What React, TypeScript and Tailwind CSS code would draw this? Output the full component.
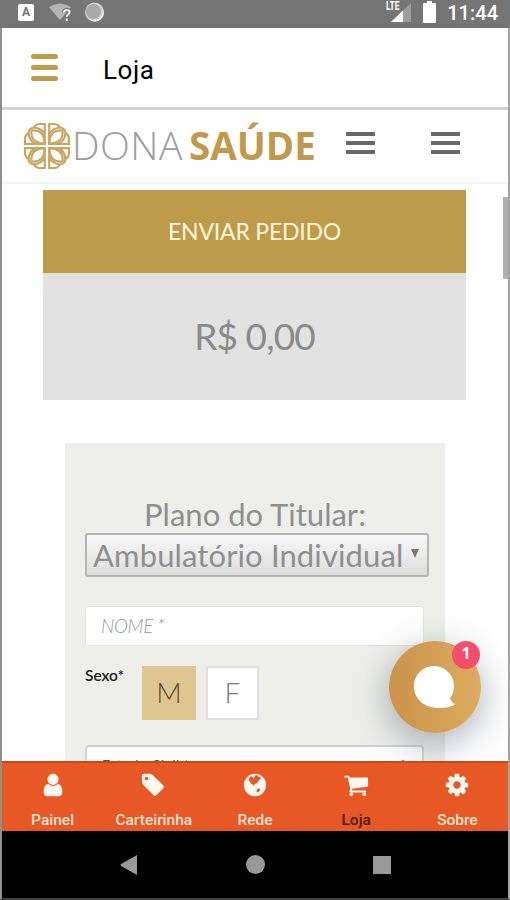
import React from "react";

const tabs = [
  {
    label: "Painel",
    viewBox: "0 0 1280 1792",
    path: "M1280 1399q0 109-62.500 187t-150.500 78h-854q-88 0-150.500-78t-62.500-187q0-85 8.500-160.500t31.500-152 58.500-131 94-89 134.500-34.500q131 128 313 128t313-128q76 0 134.500 34.500t94 89 58.500 131 31.500 152 8.500 160.500zm-256-887q0 159-112.500 271.500t-271.500 112.500-271.500-112.500-112.500-271.500 112.500-271.500 271.500-112.500 271.500 112.500 112.500 271.500z",
  },
  {
    label: "Carteirinha",
    viewBox: "0 0 1536 1792",
    path: "M384 448q0-53-37.500-90.500t-90.500-37.500-90.500 37.500-37.500 90.500 37.500 90.500 90.500 37.500 90.500-37.500 37.500-90.500zm1067 576q0 53-37 90l-491 492q-39 37-91 37-53 0-90-37l-715-716q-38-37-64.500-101t-26.500-117v-416q0-52 38-90t90-38h416q53 0 117 26.500t102 64.500l715 714q37 39 37 91z",
  },
  {
    label: "Rede",
    viewBox: "0 0 1536 1792",
    path: "M768 128a768 768 0 1 0 0 1536a768 768 0 1 0 0-1536zM390 380L520 300L650 400L760 330L740 250L900 230L1010 330L1120 330L1180 450L1060 540L980 680L850 790L730 850L690 970L600 860L470 800L410 650L330 560zM880 1230L1010 1120L1130 1190L1080 1330L900 1430z",
  },
  {
    label: "Loja",
    viewBox: "0 0 1664 1792",
    path: "M640 1536q0 52-38 90t-90 38-90-38-38-90 38-90 90-38 90 38 38 90zm896 0q0 52-38 90t-90 38-90-38-38-90 38-90 90-38 90 38 38 90zm128-1088v512q0 24-16.500 42.500t-40.500 21.500l-1044 122q13 60 13 70 0 16-24 64h920q26 0 45 19t19 45-19 45-45 19h-1024q-26 0-45-19t-19-45q0-11 8-31.500t16-36 21.500-40 15.500-29.500l-177-823h-204q-26 0-45-19t-19-45 19-45 45-19h256q16 0 28.500 6.500t19.500 15.500 13 24.500 8 26 5.500 29.500 4.500 26h1201q26 0 45 19t19 45z",
  },
  {
    label: "Sobre",
    viewBox: "0 0 1536 1792",
    path: "M1024 896q0-106-75-181t-181-75-181 75-75 181 75 181 181 75 181-75 75-181zm512-109v222q0 12-8 23t-20 13l-185 28q-19 54-39 91 35 50 107 138 10 12 10 25t-9 23q-27 37-99 108t-94 71q-12 0-26-9l-138-108q-44 23-91 38-16 136-29 186-7 28-36 28h-222q-14 0-24.500-8.500t-11.500-21.500l-28-184q-49-16-90-37l-141 107q-10 9-25 9-14 0-25-11-126-114-165-168-7-10-7-23 0-12 8-23 15-21 51-66.500t54-70.500q-27-50-41-99l-183-27q-13-2-21-12.500t-8-23.500v-222q0-12 8-23t19-13l186-28q14-46 39-92-40-57-107-138-10-12-10-24 0-10 9-23 26-36 98.500-107.500t94.500-71.500q13 0 26 10l138 107q44-23 91-38 16-136 29-186 7-28 36-28h222q14 0 24.500 8.500t11.500 21.500l28 184q49 16 90 37l142-107q9-9 24-9 13 0 25 10 129 119 165 170 7 8 7 22 0 12-8 23-15 21-51 66.500t-54 70.500q26 50 41 98l183 28q13 2 21 12.500t8 23.500z",
  },
];

function StatusBar() {
  return (
    <div className="flex h-7 shrink-0 items-start justify-between bg-[#757575] pl-[18px] pr-3 text-white">
      <div className="flex items-start">
        <div className="mt-1 flex h-[17px] w-4 items-center justify-center rounded-[2px] bg-white font-['Roboto',sans-serif] text-[12px] font-bold leading-[17px] text-[#757575]">
          A
        </div>
        <svg className="ml-[15px] mt-[2px]" width="24" height="21" viewBox="0 0 24 21">
          <path d="M0 5Q11-2 22 5L11 18z" fill="#b5b5b5" />
          <path
            d="M15 10.500Q15 8 17.700 8Q20.500 8 20.500 10.300Q20.500 11.500 19 12.500Q17.700 13.400 17.700 15M17.700 16.500V19"
            fill="none"
            stroke="#757575"
            strokeWidth="4"
          />
          <path
            d="M15 10.500Q15 8 17.700 8Q20.500 8 20.500 10.300Q20.500 11.500 19 12.500Q17.700 13.400 17.700 15M17.700 16.500V19"
            fill="none"
            stroke="#f2f2f2"
            strokeWidth="2"
          />
        </svg>
        <svg className="ml-[11px] mt-[2px]" width="21" height="21" viewBox="0 0 21 21">
          <circle cx="10.500" cy="10" r="9.500" fill="#d0d0d0" />
          <circle cx="9.500" cy="9.500" r="7.500" fill="#a9a9a9" />
          <path d="M4 16.500Q14 21.500 18.500 12Q19 9 18.500 6Q22 14 15 18.500Q9 21 4 16.500" fill="#f5f5f5" />
        </svg>
      </div>
      <div className="flex items-start">
        <div className="relative h-6 w-[26px]">
          <svg className="absolute left-[6px] top-[3px]" width="20" height="19" viewBox="0 0 20 19">
            <path d="M0 19L20 0V19z" fill="#9d9d9d" />
            <path d="M0 19L12 7.600V19z" fill="#fff" />
          </svg>
          <span className="absolute left-[1px] top-0 origin-left scale-x-[0.7] bg-[#757575] font-['Roboto',sans-serif] text-[12px] font-bold leading-[13px]">
            LTE
          </span>
        </div>
        <svg className="ml-3" width="13" height="24" viewBox="0 0 13 24">
          <path d="M4 1h5v2h3q1 0 1 1v18q0 1-1 1H1q-1 0-1-1V4q0-1 1-1h3z" fill="#fff" />
        </svg>
        <span className="ml-[11px] mt-[2px] font-['Roboto',sans-serif] text-[20px] font-medium leading-[22px]">
          11:44
        </span>
      </div>
    </div>
  );
}

function LogoQuarter({ transform }: { transform?: string }) {
  return (
    <g transform={transform}>
      <path d="M-2.200-2.200V-22H-7Q-11-22-13-18.500Q-18-18-18.500-13Q-22-11-22-7V-2.200z" />
      <path d="M-2.200-2.200Q-17-3-15.500-15.500Q-3-17-2.200-2.200M-13-18.500Q-6-18-2.200-12M-18.500-13Q-18-6-12-2.200" />
    </g>
  );
}

function Logo() {
  return (
    <div className="flex w-[300px] items-center">
      <svg width="48" height="48" viewBox="-24 -24 48 48" fill="none" stroke="#c8a561" strokeWidth="2.200">
        <LogoQuarter />
        <LogoQuarter transform="scale(-1 1)" />
        <LogoQuarter transform="scale(1 -1)" />
        <LogoQuarter transform="scale(-1 -1)" />
      </svg>
      <span className="mb-[3px] ml-px w-[117px] font-['Open_Sans',sans-serif] text-[39px] font-light leading-[48px] tracking-[0.5px] text-[#9d9d9d]">
        DONA
      </span>
      <span className="mb-[3px] font-['Open_Sans',sans-serif] text-[38.500px] font-bold leading-[48px] text-[#bf9a4b]">
        SAÚDE
      </span>
    </div>
  );
}

function Burger() {
  return (
    <button className="mb-[6px] flex w-[29px] flex-col gap-[5px]">
      <span className="h-1 w-full bg-[#686868]" />
      <span className="h-1 w-full bg-[#686868]" />
      <span className="h-1 w-full bg-[#686868]" />
    </button>
  );
}

function ChatButton() {
  return (
    <button className="absolute left-[387px] top-[531px] h-[92px] w-[92px] rounded-full bg-linear-to-r from-[#cc9349] to-[#dcab61] shadow-[0_10px_32px_4px_rgba(60,70,90,0.35)]">
      <svg className="absolute left-[25px] top-[25px]" width="42" height="43" viewBox="0 0 42 43">
        <path d="M20 0C31 0 40 9 40 20Q40 28 36 32Q37 36 41 38Q37 42 25 42C9 42 0 32 0 20C0 9 9 0 20 0" fill="#fff" />
      </svg>
      <span className="absolute left-[63px] top-0 flex h-7 w-7 items-center justify-center rounded-full bg-[#f64c6b] pb-1 font-['Open_Sans',sans-serif] text-[16px] font-bold text-white">
        1
      </span>
    </button>
  );
}

export default function App() {
  return (
    <div className="flex h-[900px] w-[510px] flex-col overflow-hidden bg-white">
      <StatusBar />
      <div className="flex min-h-0 flex-1 flex-col border-x-2 border-b-2 border-l-[#8f8f8f] border-r-[#a5a5a5] border-b-[#444]">
        {/* app bar */}
        <header className="flex h-[79px] shrink-0 items-center pl-[29px]">
          <div className="flex w-[27px] flex-col gap-[6px]">
            <span className="h-[5px] rounded-full bg-[#bf9a4b]" />
            <span className="h-[5px] rounded-full bg-[#bf9a4b]" />
            <span className="h-[5px] rounded-full bg-[#bf9a4b]" />
          </div>
          <h1 className="ml-[45px] mt-[5px] font-['Roboto',sans-serif] text-[26px] leading-8 tracking-[0.6px] text-black">
            Loja
          </h1>
        </header>

        <main className="relative flex min-h-0 flex-1 flex-col overflow-hidden border-t-[3px] border-[#d2d2d2]">
          <div className="flex h-[74px] shrink-0 items-center border-b-2 border-[#f3f4f4] pl-[21px]">
            <Logo />
            <div className="ml-[23px]">
              <Burger />
            </div>
            <div className="ml-[56px]">
              <Burger />
            </div>
          </div>

          <section className="ml-[41px] mt-[6px] w-[423px] shrink-0 text-center font-['Lato',sans-serif]">
            <button className="block h-[83px] w-full bg-[#be9a4b] text-[23px] tracking-[-0.2px] text-[#fff6dc]">
              ENVIAR PEDIDO
            </button>
            <div className="flex h-[127px] items-center justify-center bg-[#e2e2e2] pb-[2px] text-[37px] tracking-[-0.9px] text-[#8a8a8a]">
              R$ 0,00
            </div>
          </section>

          <form className="ml-[63px] mt-[43px] h-[400px] w-[380px] shrink-0 bg-[#eeefeb] px-[20px] pt-[53px] font-['Lato',sans-serif]">
            <p className="mb-px text-center text-[31px] leading-[36px] text-[#8f8f8f]">
              Plano do Titular:
            </p>
            <div className="flex h-[44px] w-[344px] items-center rounded-[3px] border-2 border-[#b5b5b3] bg-linear-to-b from-[#f8f8f8] to-[#dedede] pl-[6px] text-[31px] tracking-[0.12px] text-[#8f8f8f]">
              <span className="w-[318px] whitespace-nowrap leading-9">Ambulatório Individual</span>
              <svg className="-mt-1" width="8" height="9" viewBox="0 0 8 9">
                <path d="M0 0h8L4 9z" fill="#777" />
              </svg>
            </div>
            <div className="mt-[29px] flex h-[40px] w-[339px] items-center rounded-[3px] border border-[#e2e2e0] bg-white pl-[15px] text-[19px] font-light italic tracking-[-0.4px] text-[#999]">
              NOME *
            </div>
            <div className="mt-[20px] flex h-[54px]">
              <span className="w-[57px] text-[15.500px] font-semibold leading-[19px] text-[#222]">
                Sexo*
              </span>
              <span className="flex w-[54px] items-center justify-center bg-[#dfc58f] pb-[3px] text-[28px] font-light text-[#5b4b35]">
                M
              </span>
              <span className="ml-[10px] flex w-[53px] items-center justify-center border-2 border-[#dedfe0] bg-white pb-[3px] text-[28px] font-light text-[#777]">
                F
              </span>
            </div>
            <div className="mt-[25px] flex h-[42px] w-[339px] justify-between rounded-[4px] border-2 border-[#d0d2d2] bg-white px-[14px] pt-[8px] text-[16px] italic leading-[20px] text-[#555]">
              <span>Estado Civil *</span>
              <svg className="mt-[4px]" width="10" height="7" viewBox="0 0 10 7">
                <path d="M0 5l5-4l5 4" fill="none" stroke="#888" />
              </svg>
            </div>
          </form>

          {/* scroll thumb */}
          <div className="absolute right-0 top-[87px] h-[82px] w-[5px] bg-[#b0b0b0]" />
          <ChatButton />
        </main>

        <nav className="grid h-[70px] shrink-0 grid-cols-5 border-t-2 border-[#c24c22] bg-[#e75825] font-['Roboto',sans-serif] text-[15.500px] font-medium text-[#fde5d5]">
          {tabs.map((tab) => (
            <a key={tab.label} className="flex flex-col items-center pt-[9px]">
              <svg className="h-[26px] w-[26px]" viewBox={tab.viewBox} fill="#fff8f0" fillRule="evenodd">
                <path d={tab.path} />
              </svg>
              <span
                className={
                  tab.label === "Loja"
                    ? "mt-[12px] leading-5 text-[#4f1b08]"
                    : "mt-[12px] leading-5"
                }
              >
                {tab.label}
              </span>
            </a>
          ))}
        </nav>

        <footer className="flex h-[67px] shrink-0 items-center justify-center gap-[108px] bg-black">
          <svg width="18" height="20" viewBox="0 0 18 20">
            <path d="M17 0V20L1 11Q0 10 1 9z" fill="#999" />
          </svg>
          <span className="h-[19px] w-[19px] rounded-full bg-[#999]" />
          <span className="h-[18px] w-[18px] bg-[#999]" />
        </footer>
      </div>
    </div>
  );
}
